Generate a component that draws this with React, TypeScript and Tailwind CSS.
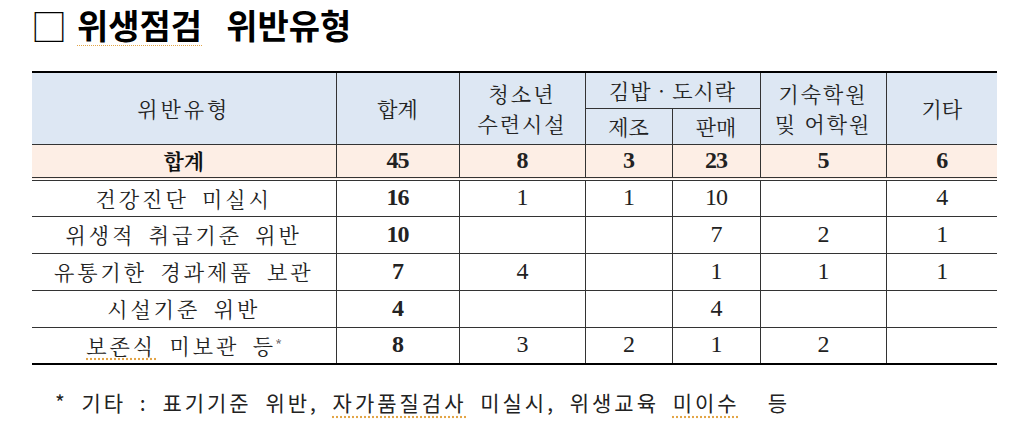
import React from 'react';

const serifKr = { fontFamily: '"Noto Serif CJK KR", "Noto Sans CJK KR", serif' };

interface Row {
  label: React.ReactNode;
  total: string;
  youth: string;
  make: string;
  sell: string;
  academy: string;
  etc: string;
}

const rows: Row[] = [
  { label: '건강진단 미실시', total: '16', youth: '1', make: '1', sell: '10', academy: '', etc: '4' },
  { label: '위생적 취급기준 위반', total: '10', youth: '', make: '', sell: '7', academy: '2', etc: '1' },
  { label: '유통기한 경과제품 보관', total: '7', youth: '4', make: '', sell: '1', academy: '1', etc: '1' },
  { label: '시설기준 위반', total: '4', youth: '', make: '', sell: '4', academy: '', etc: '' },
  {
    label: (
      <>
        <span className="underline decoration-dotted decoration-[#e3a547] underline-offset-[5px]">보존식</span> 미보관 등
        <sup className="text-[11px] tracking-normal">*</sup>
      </>
    ),
    total: '8',
    youth: '3',
    make: '2',
    sell: '1',
    academy: '2',
    etc: '',
  },
];

const Num: React.FC<{ v: string; bold?: boolean }> = ({ v, bold }) => (
  <span className={`font-['Liberation_Serif',serif] text-[24px] tracking-[-1px] ${bold ? 'font-bold' : ''}`}>{v}</span>
);

const App: React.FC = () => {
  const th = 'border-l border-[#333] font-normal text-[21px] leading-[30px] text-[#222] align-middle';
  const td = 'border-l border-[#333] text-center align-middle text-[#222] leading-[24px]';

  return (
    <div className="w-[1024px] h-[447px] bg-white overflow-hidden">
      <div className="h-[46px] pt-[4px] pl-[31px] flex items-center font-['Noto_Sans_CJK_KR',sans-serif] text-black">
        <span className="text-[36px] leading-[42px]">□</span>
        <span className="ml-[10px] text-[34px] leading-[42px] font-bold underline decoration-dotted decoration-[#e3a547] underline-offset-[6px] decoration-1">
          위생점검
        </span>
        <span className="ml-[24px] text-[34px] leading-[42px] font-bold">위반유형</span>
      </div>

      <table
        className="ml-[32px] mt-[25px] w-[965px] table-fixed border-collapse border-t-2 border-b-2 border-black"
        style={serifKr}
      >
        <colgroup>
          <col className="w-[304px]" />
          <col className="w-[123px]" />
          <col className="w-[126px]" />
          <col className="w-[87px]" />
          <col className="w-[88px]" />
          <col className="w-[126px]" />
          <col className="w-[111px]" />
        </colgroup>
        <thead className="bg-[#dde7f3]">
          <tr className="h-[36px]">
            <th rowSpan={2} className="font-normal text-[21px] tracking-[3px] text-[#222] border-b border-[#333]">
              위반유형
            </th>
            <th rowSpan={2} className={`${th} border-b`}>
              합계
            </th>
            <th rowSpan={2} className={`${th} border-b tracking-[2px]`}>
              청소년
              <br />
              수련시설
            </th>
            <th colSpan={2} className={`${th} border-b tracking-[1px]`}>
              김밥 · 도시락
            </th>
            <th rowSpan={2} className={`${th} border-b tracking-[2px] leading-[28px]`}>
              기숙학원
              <br />
              및 어학원
            </th>
            <th rowSpan={2} className={`${th} border-b`}>
              기타
            </th>
          </tr>
          <tr className="h-[36px]">
            <th className={`${th} border-b`}>제조</th>
            <th className={`${th} border-b`}>판매</th>
          </tr>
        </thead>
        <tbody>
          <tr className="h-[35px] bg-[#fdeee5] border-b-4 border-double border-[#333]">
            <td className="text-center font-bold text-[21px] text-[#111]">합계</td>
            <td className={td}><Num v="45" bold /></td>
            <td className={td}><Num v="8" bold /></td>
            <td className={td}><Num v="3" bold /></td>
            <td className={td}><Num v="23" bold /></td>
            <td className={td}><Num v="5" bold /></td>
            <td className={td}><Num v="6" bold /></td>
          </tr>
          {rows.map((r, i) => (
            <tr key={i} className={`h-[37px] ${i < rows.length - 1 ? 'border-b border-[#333]' : ''}`}>
              <td className="text-center text-[21px] tracking-[3px] [word-spacing:5px] text-[#222]">{r.label}</td>
              <td className={td}><Num v={r.total} bold /></td>
              <td className={td}><Num v={r.youth} /></td>
              <td className={td}><Num v={r.make} /></td>
              <td className={td}><Num v={r.sell} /></td>
              <td className={td}><Num v={r.academy} /></td>
              <td className={td}><Num v={r.etc} /></td>
            </tr>
          ))}
        </tbody>
      </table>

      <p className="mt-[23px] pl-[55px] text-[21px] leading-[28px] text-[#222] font-['Noto_Sans_CJK_KR',sans-serif] tracking-[3px] [word-spacing:6px]">
        * 기타 : 표기기준 위반,{' '}
        <span className="underline decoration-dotted decoration-[#e3a547] underline-offset-[5px]">자가품질검사</span> 미실시,
        위생교육 <span className="underline decoration-dotted decoration-[#e3a547] underline-offset-[5px]">미이수</span>
        <span className="ml-[28px]">등</span>
      </p>
    </div>
  );
};

export default App;
